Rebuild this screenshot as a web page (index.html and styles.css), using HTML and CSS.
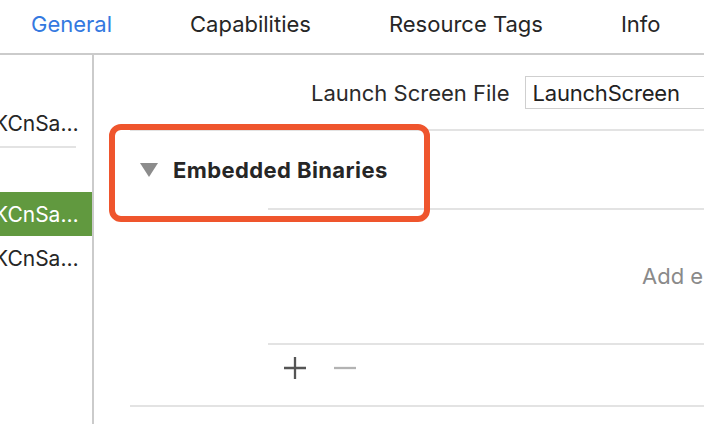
FILE: index.html
```html
<!DOCTYPE html>
<html>
<head>
<meta charset="utf-8">
<link rel="stylesheet" href="styles.css">
</head>
<body>
<div class="tabs">
  <span class="tab active">General</span>
  <span class="tab">Capabilities</span>
  <span class="tab">Resource Tags</span>
  <span class="tab">Info</span>
</div>
<div class="main">
  <div class="sidebar">
    <div class="item"><span class="name">KCnSa…</span></div>
    <div class="sep"></div>
    <div class="spacer"></div>
    <div class="item selected"><span class="name">KCnSa…</span></div>
    <div class="item"><span class="name">KCnSa…</span></div>
  </div>
  <div class="content">
    <div class="launch-row">
      <span class="label">Launch Screen File</span>
      <div class="field">LaunchScreen</div>
    </div>
    <div class="section-line"></div>
    <div class="section-header">
      <svg class="disclosure" width="18" height="14" viewBox="0 0 18 14"><polygon points="0,0 18,0 9,14" fill="#8c8c8c"/></svg>
      <span class="title">Embedded Binaries</span>
    </div>
    <div class="table">
      <div class="empty">Add embedded binaries here</div>
    </div>
    <div class="toolbar">
      <svg class="btn" width="22" height="22" viewBox="0 0 22 22"><path d="M0 11H22M11 0V22" stroke="#555" stroke-width="2.3"/></svg>
      <svg class="btn" width="22" height="22" viewBox="0 0 22 22"><path d="M0 11H22" stroke="#b3b3b3" stroke-width="2.3"/></svg>
    </div>
    <div class="section-line bottom"></div>
    <div class="highlight"></div>
  </div>
</div>
</body>
</html>
```

FILE: styles.css
```css
html, body {
  margin: 0;
  padding: 0;
  background: #ffffff;
}
body {
  width: 704px;
  height: 424px;
  overflow: hidden;
  font-family: "Inter", "Liberation Sans", sans-serif;
  font-size: 22px;
  color: #262626;
}
.tabs {
  height: 53px;
  border-bottom: 2px solid #cbcbcb;
  display: flex;
  align-items: flex-start;
  padding-left: 31px;
  gap: 78px;
  box-sizing: content-box;
}
.tab {
  line-height: 26px;
  padding-top: 11px;
  white-space: nowrap;
}
.tab.active {
  color: #3479e0;
}
.main {
  display: flex;
  height: 369px;
}
.sidebar {
  width: 92px;
  border-right: 2px solid #cbcbcb;
  overflow: hidden;
  padding-top: 46px;
  flex: none;
}
.item {
  height: 44px;
  display: flex;
  align-items: center;
  white-space: nowrap;
  overflow: hidden;
  font-size: 21px;
}
.item .name {
  margin-left: -6px;
}
.item.selected {
  background: #61993f;
  color: #ffffff;
}
.sep {
  margin-top: 1px;
  width: 76px;
  height: 2px;
  background: #e3e3e3;
}
.spacer {
  height: 44px;
}
.content {
  flex: 1;
  position: relative;
  overflow: hidden;
}
.launch-row {
  display: flex;
  align-items: center;
  margin-top: 21px;
  padding-left: 217px;
  gap: 16px;
  white-space: nowrap;
}
.label {
  color: #2a2a2a;
}
.field {
  height: 31px;
  width: 300px;
  flex: none;
  border: 1px solid #cfcfcf;
  padding-left: 6px;
  display: flex;
  align-items: center;
  color: #222;
  letter-spacing: -0.2px;
}
.section-line {
  margin-top: 20px;
  margin-left: 36px;
  height: 2px;
  background: #e3e3e3;
}
.section-line.bottom {
  margin-top: 0;
}
.section-header {
  display: flex;
  align-items: center;
  height: 77px;
  padding-left: 46px;
}
.disclosure {
  margin-right: 15px;
  flex: none;
}
.title {
  font-weight: 700;
  letter-spacing: 0.4px;
  color: #262626;
}
.table {
  margin-left: 174px;
  border-top: 2px solid #e3e3e3;
  height: 137px;
  box-sizing: border-box;
  border-bottom: 2px solid #e3e3e3;
  padding-top: 53px;
  padding-left: 374px;
  white-space: nowrap;
  color: #8a8a8a;
}
.toolbar {
  margin-left: 174px;
  height: 60px;
  display: flex;
  align-items: flex-start;
  padding-top: 12px;
  box-sizing: border-box;
  padding-left: 16px;
  gap: 28px;
}
.highlight {
  position: absolute;
  left: 15px;
  top: 69px;
  width: 321px;
  height: 98px;
  box-sizing: border-box;
  border: 6px solid #ef552d;
  border-radius: 12px;
}
```
